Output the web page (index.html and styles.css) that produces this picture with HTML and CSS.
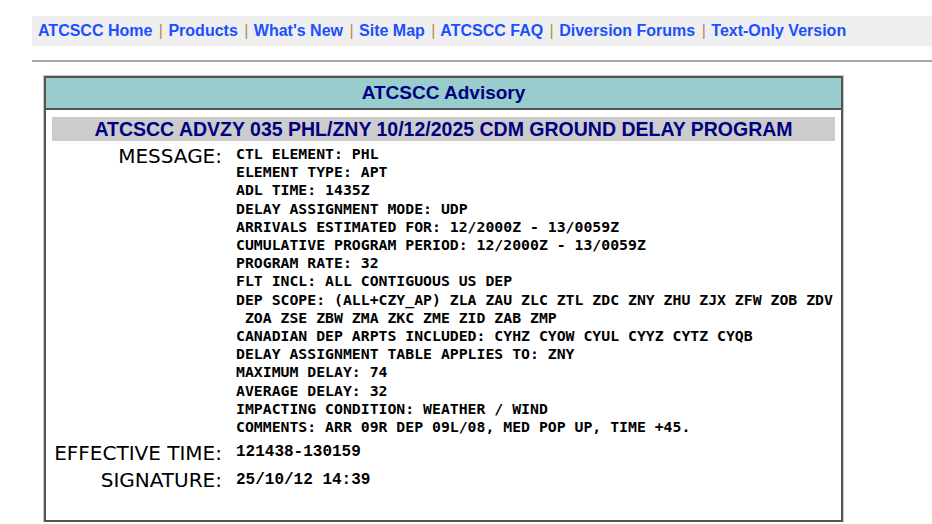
FILE: index.html
```html
<!DOCTYPE html>
<html>
<head>
<meta charset="utf-8">
<link rel="stylesheet" href="styles.css">
</head>
<body>
<nav class="nav">
  <a href="#">ATCSCC Home</a> <span class="sep">|</span> <a href="#">Products</a> <span class="sep">|</span> <a href="#">What's New</a> <span class="sep">|</span> <a href="#">Site Map</a> <span class="sep">|</span> <a href="#">ATCSCC FAQ</a> <span class="sep">|</span> <a href="#">Diversion Forums</a> <span class="sep">|</span> <a href="#">Text-Only Version</a>
</nav>
<hr class="rule">
<div class="advisory">
  <div class="adv-head">ATCSCC Advisory</div>
  <div class="adv-body">
    <div class="subject">ATCSCC ADVZY 035 PHL/ZNY 10/12/2025 CDM GROUND DELAY PROGRAM</div>
    <div class="fields">
      <div class="label">MESSAGE:</div>
      <pre class="msg">CTL ELEMENT: PHL
ELEMENT TYPE: APT
ADL TIME: 1435Z
DELAY ASSIGNMENT MODE: UDP
ARRIVALS ESTIMATED FOR: 12/2000Z - 13/0059Z
CUMULATIVE PROGRAM PERIOD: 12/2000Z - 13/0059Z
PROGRAM RATE: 32
FLT INCL: ALL CONTIGUOUS US DEP
DEP SCOPE: (ALL+CZY_AP) ZLA ZAU ZLC ZTL ZDC ZNY ZHU ZJX ZFW ZOB ZDV
 ZOA ZSE ZBW ZMA ZKC ZME ZID ZAB ZMP
CANADIAN DEP ARPTS INCLUDED: CYHZ CYOW CYUL CYYZ CYTZ CYQB
DELAY ASSIGNMENT TABLE APPLIES TO: ZNY
MAXIMUM DELAY: 74
AVERAGE DELAY: 32
IMPACTING CONDITION: WEATHER / WIND
COMMENTS: ARR 09R DEP 09L/08, MED POP UP, TIME +45.</pre>
      <div class="label gap-top">EFFECTIVE TIME:</div>
      <div class="val gap-top">121438-130159</div>
      <div class="label">SIGNATURE:</div>
      <div class="val">25/10/12 14:39</div>
    </div>
  </div>
</div>
</body>
</html>
```
FILE: styles.css
```css
html, body {
  margin: 0;
  padding: 0;
  background: #ffffff;
}
body {
  padding: 16px 0 0 32px;
  font-family: "Liberation Sans", Arial, sans-serif;
}
.nav {
  background: #efefef;
  height: 30px;
  line-height: 30px;
  padding-left: 6px;
  font-size: 16px;
  font-weight: bold;
  white-space: nowrap;
}
.nav a {
  color: #1a50ff;
  text-decoration: none;
}
.nav .sep {
  color: #b88a50;
  font-weight: normal;
  margin: 0 1px 0 2px;
}
.rule {
  margin: 14px 0 0 0;
  border: 0;
  border-top: 2px solid #a6a6a6;
  height: 0;
}
.advisory {
  margin: 14px 0 0 12px;
  width: 795px;
  height: 442px;
  border: 2px solid #555555;
  box-shadow: 0 0 0 1px #c8c8c8;
}
.adv-head {
  background: #99cccc;
  height: 30px;
  line-height: 30px;
  border-bottom: 2px solid #555555;
  text-align: center;
  color: #000080;
  font-weight: bold;
  font-size: 19px;
}
.adv-body {
  padding: 7px 6px 0 6px;
}
.subject {
  background: #cccccc;
  height: 24px;
  line-height: 24px;
  text-align: center;
  color: #000080;
  font-weight: bold;
  font-size: 19.5px;
}
.fields {
  display: grid;
  grid-template-columns: 170px 1fr;
  column-gap: 14px;
  margin-top: 4px;
}
.label {
  text-align: right;
  font-family: "DejaVu Sans", Verdana, sans-serif;
  font-size: 20px;
  color: #000000;
  line-height: 22px;
  white-space: nowrap;
}
.label.gap-top {
  margin-top: 6px;
}
.msg {
  margin: 0;
  padding-top: 0;
  font-family: "DejaVu Sans Mono", Consolas, monospace;
  font-weight: bold;
  font-size: 14.8px;
  line-height: 18.2px;
  color: #000000;
}
.val {
  font-family: "Liberation Mono", "Courier New", monospace;
  font-weight: bold;
  font-size: 16px;
  line-height: 22px;
  padding-top: 0;
  margin-bottom: 6px;
  color: #000000;
}
.val.gap-top {
  margin-top: 5px;
}
```
